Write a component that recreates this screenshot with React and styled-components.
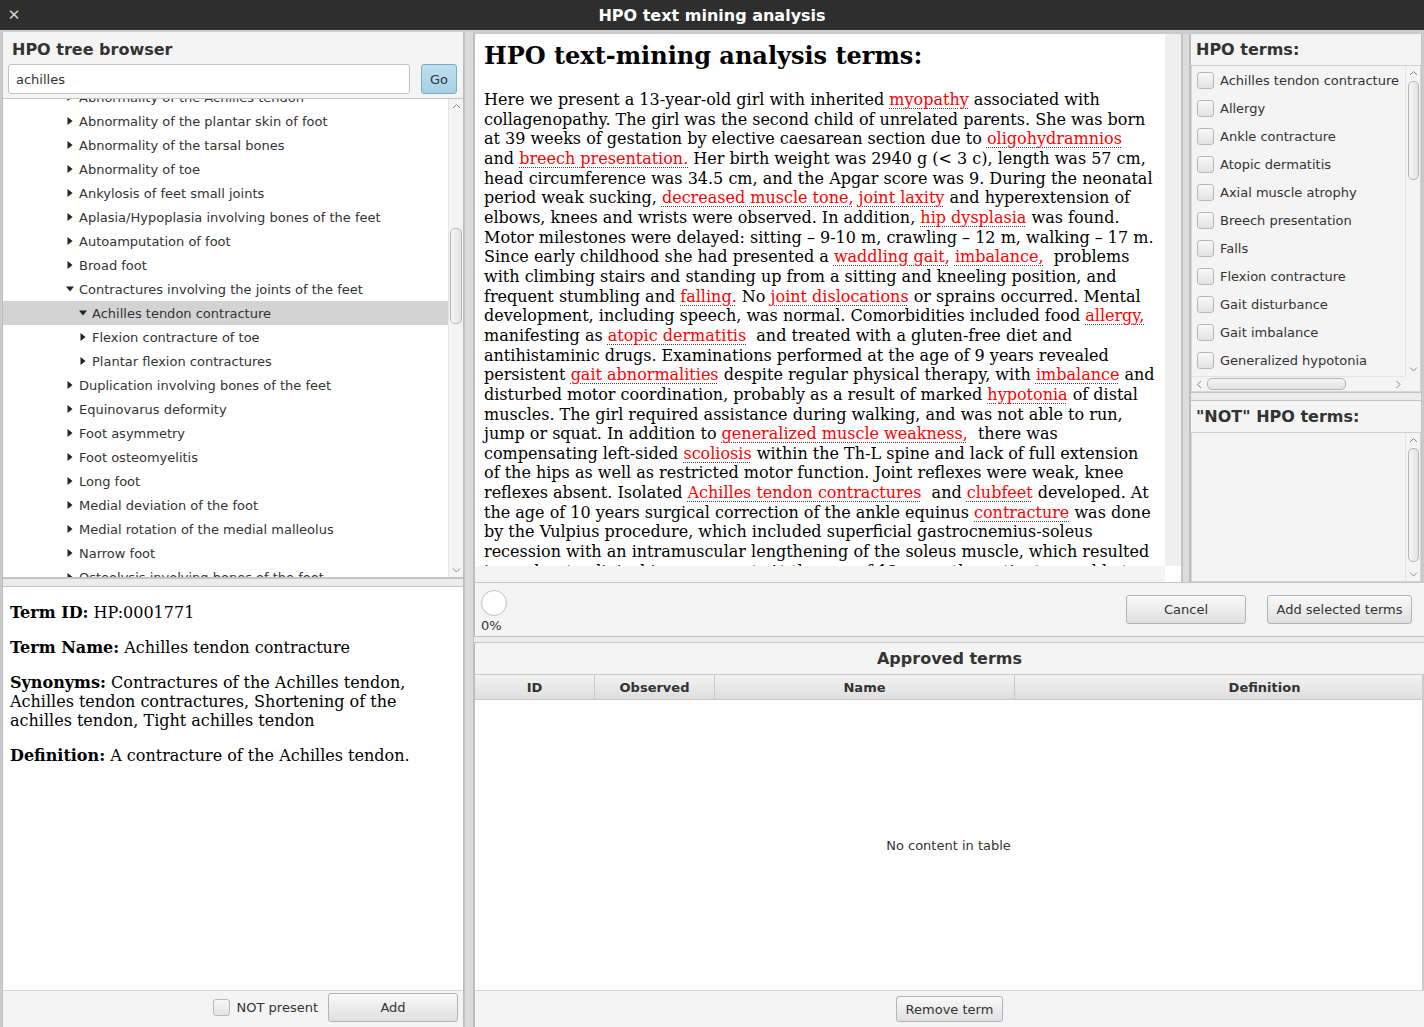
import React from 'react';
import styled, { createGlobalStyle } from 'styled-components';

const UI = '"DejaVu Sans", Verdana, sans-serif';
const SERIF = '"DejaVu Serif", "Liberation Serif", serif';

const GlobalStyle = createGlobalStyle`
  html, body { margin: 0; padding: 0; }
  body {
    width: 1424px;
    height: 1027px;
    overflow: hidden;
    background: #cbcbcb;
    font-family: ${UI};
    color: #333;
  }
  * { box-sizing: border-box; }
`;

const Window = styled.div`
  width: 1424px;
  height: 1027px;
  display: flex;
  flex-direction: column;
  overflow: hidden;
`;

const TitleBar = styled.div`
  height: 30px;
  flex: none;
  background: #2e2e2e;
  display: grid;
  grid-template-columns: 30px 1fr 30px;
  align-items: center;
  color: #fff;
  font: bold 16px ${UI};
`;

const CloseMark = styled.span`
  color: #d4d4d4;
  font-size: 15px;
  font-weight: bold;
  text-align: center;
  padding-right: 2px;
`;

const Title = styled.div`
  text-align: center;
`;

const Main = styled.div`
  flex: 1;
  display: grid;
  grid-template-columns: 462px 10px minmax(0, 1fr);
  padding: 2px 0 0 2px;
  min-height: 0;
`;

/* ---------- left column ---------- */

const LeftColumn = styled.div`
  display: flex;
  flex-direction: column;
  border-left: 1px solid #bdbdbd;
  border-right: 1px solid #bdbdbd;
  min-height: 0;
`;

const BrowserHeader = styled.div`
  background: #f4f4f4;
  padding: 9px 4px 4px 9px;
  flex: none;
`;

const PanelHeading = styled.div`
  font: bold 16px/18px ${UI};
  color: #333;
  white-space: nowrap;
`;

const SearchRow = styled.div`
  display: flex;
  align-items: center;
  gap: 11px;
  margin-top: 5px;
  margin-left: -4px;
`;

const SearchField = styled.div`
  width: 402px;
  height: 30px;
  background: #fff;
  border: 1px solid #c2c2c2;
  border-radius: 3px;
  padding-left: 7px;
  display: flex;
  align-items: center;
  font-size: 13px;
  color: #333;
`;

const GoButton = styled.div`
  width: 36px;
  height: 30px;
  border: 1px solid #83a9bf;
  border-radius: 3px;
  background: linear-gradient(#bde0f1, #a3d0e6);
  display: flex;
  align-items: center;
  justify-content: center;
  font-size: 13px;
  color: #333;
`;

const TreeBox = styled.div`
  height: 480px;
  flex: none;
  display: flex;
  background: #fff;
  border-top: 1px solid #c4c4c4;
  border-bottom: 1px solid #c4c4c4;
  overflow: hidden;
`;

const TreeViewport = styled.div`
  flex: 1;
  overflow: hidden;
`;

const TreeList = styled.div`
  margin-top: -14px;
`;

const TreeRow = styled.div`
  height: 24px;
  display: flex;
  align-items: center;
  padding-left: ${p => 63 + (p.$level - 1) * 13}px;
  background: ${p => (p.$selected ? '#d3d3d3' : 'transparent')};
  font-size: 13px;
  color: #333;
  white-space: nowrap;
`;

const Disclosure = styled.span`
  width: 13px;
  flex: none;
  display: flex;
  align-items: center;
`;

const SplitBar = styled.div`
  height: ${p => p.$h || 9}px;
  flex: none;
  background: #ececec;
  border-top: 1px solid #c4c4c4;
  border-bottom: 1px solid #c4c4c4;
`;

const DetailPane = styled.div`
  flex: 1;
  background: #fff;
  padding: 16px 10px 0 7px;
  font: 16px/19px ${SERIF};
  color: #000;
`;

const DetailPara = styled.p`
  margin: 0 0 16px;
  white-space: nowrap;
`;

const Bold = styled.b`
  font-weight: bold;
`;

const BottomBar = styled.div`
  height: 37px;
  flex: none;
  background: #f4f4f4;
  border-top: 1px solid #d6d6d6;
  display: flex;
  align-items: center;
  justify-content: ${p => (p.$center ? 'center' : 'flex-end')};
  padding: 0 ${p => (p.$center ? 0 : 5)}px ${p => (p.$center ? 0 : 4)}px 0;
  gap: 10px;
`;

const CheckLabel = styled.label`
  display: flex;
  align-items: center;
  gap: 7px;
  font-size: 13px;
  color: #333;
  white-space: nowrap;
`;

const Box = styled.span`
  width: 17px;
  height: 17px;
  flex: none;
  border: 1px solid #b8b8b8;
  border-radius: 3px;
  background: linear-gradient(#f8f8f8, #e3e3e3);
`;

const Button = styled.div`
  width: ${p => p.$w}px;
  height: ${p => p.$h || 28}px;
  flex: none;
  border: 1px solid #b3b3b3;
  border-radius: 3px;
  background: linear-gradient(#f9f9f9, #e0e0e0);
  display: flex;
  align-items: center;
  justify-content: center;
  font-size: 13px;
  color: #333;
  white-space: nowrap;
`;

const Divider = styled.div`
  background: #dcdcdc;
  border-left: 1px solid #c4c4c4;
  border-right: 1px solid #bdbdbd;
`;

/* ---------- centre column ---------- */

const CenterColumn = styled.div`
  display: flex;
  flex-direction: column;
  min-height: 0;
  min-width: 0;
  overflow: hidden;
`;

const TopSplit = styled.div`
  height: 549px;
  margin-top: 2px;
  flex: none;
  display: grid;
  grid-template-columns: 708px 8px minmax(0, 1fr);
  border-bottom: 1px solid #c4c4c4;
`;

const WebFrame = styled.div`
  display: grid;
  grid-template-columns: minmax(0, 1fr) 16px;
  grid-template-rows: minmax(0, 1fr) 16px;
  border-left: 1px solid #bdbdbd;
  border-right: 1px solid #c4c4c4;
  background: #f3f3f3;
  min-height: 0;
`;

const WebPage = styled.div`
  background: #fff;
  padding: 7px 0 0 9px;
  overflow: hidden;
  font-family: ${SERIF};
  color: #000;
  min-height: 0;
`;

const WebHeading = styled.h2`
  margin: 0 0 19px;
  font: bold 24px/30px ${SERIF};
  color: #000;
`;

const WebLine = styled.div`
  font-size: 16px;
  line-height: 19.65px;
  white-space: nowrap;
`;

const Term = styled.span`
  color: #f00;
  text-decoration-line: underline;
  text-decoration-style: dotted;
  text-decoration-color: #444;
  text-decoration-thickness: 1px;
  text-underline-offset: 3px;
`;

const ScrollTrackV = styled.div`
  background: #efefef;
`;

const Corner = styled.div`
  background: #fff;
`;

const RightPanel = styled.div`
  display: flex;
  flex-direction: column;
  border-left: 1px solid #bdbdbd;
  border-right: 1px solid #c4c4c4;
  background: #f4f4f4;
  margin-right: 2px;
  min-height: 0;
  min-width: 0;
`;

const ListHeader = styled.div`
  height: ${p => p.$h}px;
  flex: none;
  display: flex;
  align-items: center;
  padding-left: 5px;
  border-bottom: 1px solid #cfcfcf;
`;

const TermsList = styled.div`
  flex: ${p => (p.$grow ? 1 : 'none')};
  height: ${p => (p.$h ? `${p.$h}px` : 'auto')};
  display: grid;
  grid-template-columns: minmax(0, 1fr) 15px;
  grid-template-rows: minmax(0, 1fr) ${p => (p.$hbar ? '15px' : '0px')};
  border: 1px solid #d6d6d6;
  border-top: none;
  overflow: hidden;
`;

const TermsRows = styled.div`
  overflow: hidden;
`;

const TermRow = styled.div`
  height: 28px;
  display: flex;
  align-items: center;
  gap: 6px;
  padding-left: 5px;
  font-size: 13px;
  color: #333;
  white-space: nowrap;
`;

const VBar = styled.div`
  display: flex;
  flex-direction: column;
  align-items: center;
  background: #f4f4f4;
  border-left: 1px solid #e4e4e4;
`;

const HBar = styled.div`
  display: flex;
  align-items: center;
  background: #f4f4f4;
  border-top: 1px solid #e4e4e4;
`;

const ArrowCell = styled.div`
  width: ${p => p.$w || 14}px;
  height: ${p => p.$h || 14}px;
  flex: none;
  display: flex;
  align-items: center;
  justify-content: center;
`;

const VThumb = styled.div`
  width: ${p => p.$thick || 12}px;
  height: ${p => p.$len}px;
  margin-top: ${p => p.$offset}px;
  border: 1px solid #b5b5b5;
  border-radius: 5px;
  background: linear-gradient(to right, #f6f6f6, #e2e2e2);
`;

const HThumb = styled.div`
  height: 12px;
  width: ${p => p.$len}px;
  margin-left: ${p => p.$offset}px;
  border: 1px solid #b5b5b5;
  border-radius: 5px;
  background: linear-gradient(#f6f6f6, #e2e2e2);
`;

const Spacer = styled.div`
  flex: 1;
`;

const ProgressRow = styled.div`
  height: 53px;
  flex: none;
  background: #f4f4f4;
  border-left: 1px solid #bdbdbd;
  display: flex;
  align-items: flex-start;
  padding: 7px 12px 0 6px;
`;

const ProgressBlock = styled.div`
  display: flex;
  flex-direction: column;
  font-size: 13px;
  color: #333;
  line-height: 14px;
`;

const Spinner = styled.div`
  width: 26px;
  height: 26px;
  border-radius: 50%;
  background: #fff;
  border: 1px solid #c0c0c0;
  margin-bottom: 3px;
`;

const ButtonGroup = styled.div`
  margin-left: auto;
  margin-top: 5px;
  display: flex;
  gap: 21px;
`;

const ApprovedSection = styled.div`
  flex: 1;
  display: flex;
  flex-direction: column;
  border-left: 1px solid #bdbdbd;
  min-height: 0;
  min-width: 0;
  overflow: hidden;
`;

const SectionTitle = styled.div`
  height: 31px;
  flex: none;
  background: #f4f4f4;
  display: flex;
  align-items: center;
  justify-content: center;
  font: bold 16px ${UI};
  color: #333;
`;

const TableHead = styled.div`
  height: 26px;
  flex: none;
  display: grid;
  grid-template-columns: 120px 120px 300px 500px;
  border-top: 1px solid #c8c8c8;
  border-bottom: 1px solid #c8c8c8;
  margin-right: 2px;
  overflow: hidden;
`;

const HeadCell = styled.div`
  display: flex;
  align-items: center;
  justify-content: center;
  font: bold 13px ${UI};
  color: #333;
  background: linear-gradient(#f3f3f3, #dedede);
  border-right: 1px solid #c8c8c8;
`;

const TableBody = styled.div`
  flex: 1;
  background: #fff;
  display: flex;
  align-items: center;
  justify-content: center;
  font-size: 13px;
  color: #333;
  margin-right: 2px;
`;

/* ---------- data ---------- */

const treeRows = [
  { text: 'Abnormality of the Achilles tendon', level: 1 },
  { text: 'Abnormality of the plantar skin of foot', level: 1 },
  { text: 'Abnormality of the tarsal bones', level: 1 },
  { text: 'Abnormality of toe', level: 1 },
  { text: 'Ankylosis of feet small joints', level: 1 },
  { text: 'Aplasia/Hypoplasia involving bones of the feet', level: 1 },
  { text: 'Autoamputation of foot', level: 1 },
  { text: 'Broad foot', level: 1 },
  { text: 'Contractures involving the joints of the feet', level: 1, open: true },
  { text: 'Achilles tendon contracture', level: 2, open: true, selected: true },
  { text: 'Flexion contracture of toe', level: 2 },
  { text: 'Plantar flexion contractures', level: 2 },
  { text: 'Duplication involving bones of the feet', level: 1 },
  { text: 'Equinovarus deformity', level: 1 },
  { text: 'Foot asymmetry', level: 1 },
  { text: 'Foot osteomyelitis', level: 1 },
  { text: 'Long foot', level: 1 },
  { text: 'Medial deviation of the foot', level: 1 },
  { text: 'Medial rotation of the medial malleolus', level: 1 },
  { text: 'Narrow foot', level: 1 },
  { text: 'Osteolysis involving bones of the foot', level: 1 },
];

const hpoTerms = [
  'Achilles tendon contracture',
  'Allergy',
  'Ankle contracture',
  'Atopic dermatitis',
  'Axial muscle atrophy',
  'Breech presentation',
  'Falls',
  'Flexion contracture',
  'Gait disturbance',
  'Gait imbalance',
  'Generalized hypotonia',
];

// each line: plain strings and [term] arrays
const abstractLines = [
  ['Here we present a 13-year-old girl with inherited ', ['myopathy'], ' associated with'],
  ['collagenopathy. The girl was the second child of unrelated parents. She was born'],
  ['at 39 weeks of gestation by elective caesarean section due to ', ['oligohydramnios']],
  ['and ', ['breech presentation.'], ' Her birth weight was 2940 g (< 3 c), length was 57 cm,'],
  ['head circumference was 34.5 cm, and the Apgar score was 9. During the neonatal'],
  ['period weak sucking, ', ['decreased muscle tone,'], ' ', ['joint laxity'], ' and hyperextension of'],
  ['elbows, knees and wrists were observed. In addition, ', ['hip dysplasia'], ' was found.'],
  ['Motor milestones were delayed: sitting – 9-10 m, crawling – 12 m, walking – 17 m.'],
  ['Since early childhood she had presented a ', ['waddling gait,'], ' ', ['imbalance,'], '\u00a0 problems'],
  ['with climbing stairs and standing up from a sitting and kneeling position, and'],
  ['frequent stumbling and ', ['falling.'], ' No ', ['joint dislocations'], ' or sprains occurred. Mental'],
  ['development, including speech, was normal. Comorbidities included food ', ['allergy,']],
  ['manifesting as ', ['atopic dermatitis'], '\u00a0 and treated with a gluten-free diet and'],
  ['antihistaminic drugs. Examinations performed at the age of 9 years revealed'],
  ['persistent ', ['gait abnormalities'], ' despite regular physical therapy, with ', ['imbalance'], ' and'],
  ['disturbed motor coordination, probably as a result of marked ', ['hypotonia'], ' of distal'],
  ['muscles. The girl required assistance during walking, and was not able to run,'],
  ['jump or squat. In addition to ', ['generalized muscle weakness,'], '\u00a0 there was'],
  ['compensating left-sided ', ['scoliosis'], ' within the Th-L spine and lack of full extension'],
  ['of the hips as well as restricted motor function. Joint reflexes were weak, knee'],
  ['reflexes absent. Isolated ', ['Achilles tendon contractures'], '\u00a0 and ', ['clubfeet'], ' developed. At'],
  ['the age of 10 years surgical correction of the ankle equinus ', ['contracture'], ' was done'],
  ['by the Vulpius procedure, which included superficial gastrocnemius-soleus'],
  ['recession with an intramuscular lengthening of the soleus muscle, which resulted'],
  ['in moderate clinical improvement. At the age of 13 years the patient was able to'],
];

/* ---------- small drawings ---------- */

const Triangle = ({ open }) => (
  <svg width="8" height="8" viewBox="0 0 8 8">
    {open ? <polygon points="0,1.5 8,1.5 4,6.5" fill="#222" /> : <polygon points="1.5,0 6.5,4 1.5,8" fill="#222" />}
  </svg>
);

const Chevron = ({ dir }) => {
  const pts = {
    up: '1,5 4.5,1.5 8,5',
    down: '1,1.5 4.5,5 8,1.5',
    left: '5,1 1.5,4.5 5,8',
    right: '1.5,1 5,4.5 1.5,8',
  }[dir];
  const vertical = dir === 'up' || dir === 'down';
  return (
    <svg width={vertical ? 9 : 7} height={vertical ? 7 : 9} viewBox={vertical ? '0 0 9 7' : '0 0 7 9'}>
      <polyline points={pts} fill="none" stroke="#8a8a8a" strokeWidth="1" />
    </svg>
  );
};

const VScroll = ({ offset, len, thick }) => (
  <VBar>
    <ArrowCell><Chevron dir="up" /></ArrowCell>
    <VThumb $offset={offset} $len={len} $thick={thick} />
    <Spacer />
    <ArrowCell><Chevron dir="down" /></ArrowCell>
  </VBar>
);

/* ---------- app ---------- */

export default function App() {
  return (
    <Window>
      <GlobalStyle />
      <TitleBar>
        <CloseMark>✕</CloseMark>
        <Title>HPO text mining analysis</Title>
        <span />
      </TitleBar>

      <Main>
        <LeftColumn>
          <BrowserHeader>
            <PanelHeading>HPO tree browser</PanelHeading>
            <SearchRow>
              <SearchField>achilles</SearchField>
              <GoButton>Go</GoButton>
            </SearchRow>
          </BrowserHeader>

          <TreeBox>
            <TreeViewport>
              <TreeList>
                {treeRows.map(r => (
                  <TreeRow key={r.text} $level={r.level} $selected={r.selected}>
                    <Disclosure><Triangle open={r.open} /></Disclosure>
                    {r.text}
                  </TreeRow>
                ))}
              </TreeList>
            </TreeViewport>
            <VScroll offset={115} len={96} />
          </TreeBox>

          <SplitBar />

          <DetailPane>
            <DetailPara><Bold>Term ID:</Bold> HP:0001771</DetailPara>
            <DetailPara><Bold>Term Name:</Bold> Achilles tendon contracture</DetailPara>
            <DetailPara>
              <Bold>Synonyms:</Bold> Contractures of the Achilles tendon,<br />
              Achilles tendon contractures, Shortening of the<br />
              achilles tendon, Tight achilles tendon
            </DetailPara>
            <DetailPara><Bold>Definition:</Bold> A contracture of the Achilles tendon.</DetailPara>
          </DetailPane>

          <BottomBar>
            <CheckLabel><Box />NOT present</CheckLabel>
            <Button $w={130} $h={29}>Add</Button>
          </BottomBar>
        </LeftColumn>

        <Divider />

        <CenterColumn>
          <TopSplit>
            <WebFrame>
              <WebPage>
                <WebHeading>HPO text-mining analysis terms:</WebHeading>
                {abstractLines.map((line, i) => (
                  <WebLine key={i}>
                    {line.map((part, j) =>
                      Array.isArray(part) ? <Term key={j}>{part[0]}</Term> : <React.Fragment key={j}>{part}</React.Fragment>
                    )}
                  </WebLine>
                ))}
              </WebPage>
              <ScrollTrackV />
              <div />
              <Corner />
            </WebFrame>

            <Divider />

            <RightPanel>
              <ListHeader $h={32}>
                <PanelHeading>HPO terms:</PanelHeading>
              </ListHeader>
              <TermsList $h={326} $hbar>
                <TermsRows>
                  {hpoTerms.map(t => (
                    <TermRow key={t}><Box />{t}</TermRow>
                  ))}
                </TermsRows>
                <VScroll offset={1} len={99} thick={11} />
                <HBar>
                  <ArrowCell $w={14}><Chevron dir="left" /></ArrowCell>
                  <HThumb $offset={1} $len={139} />
                  <Spacer />
                  <ArrowCell $w={14}><Chevron dir="right" /></ArrowCell>
                </HBar>
                <div />
              </TermsList>
              <SplitBar $h={9} />
              <ListHeader $h={32}>
                <PanelHeading>"NOT" HPO terms:</PanelHeading>
              </ListHeader>
              <TermsList $grow>
                <TermsRows />
                <VScroll offset={1} len={114} thick={11} />
              </TermsList>
            </RightPanel>
          </TopSplit>

          <ProgressRow>
            <ProgressBlock>
              <Spinner />
              0%
            </ProgressBlock>
            <ButtonGroup>
              <Button $w={120} $h={29}>Cancel</Button>
              <Button $w={145} $h={29}>Add selected terms</Button>
            </ButtonGroup>
          </ProgressRow>

          <SplitBar $h={7} />

          <ApprovedSection>
            <SectionTitle>Approved terms</SectionTitle>
            <TableHead>
              <HeadCell>ID</HeadCell>
              <HeadCell>Observed</HeadCell>
              <HeadCell>Name</HeadCell>
              <HeadCell>Definition</HeadCell>
            </TableHead>
            <TableBody>No content in table</TableBody>
            <BottomBar $center>
              <Button $w={107} $h={26}>Remove term</Button>
            </BottomBar>
          </ApprovedSection>
        </CenterColumn>
      </Main>
    </Window>
  );
}
